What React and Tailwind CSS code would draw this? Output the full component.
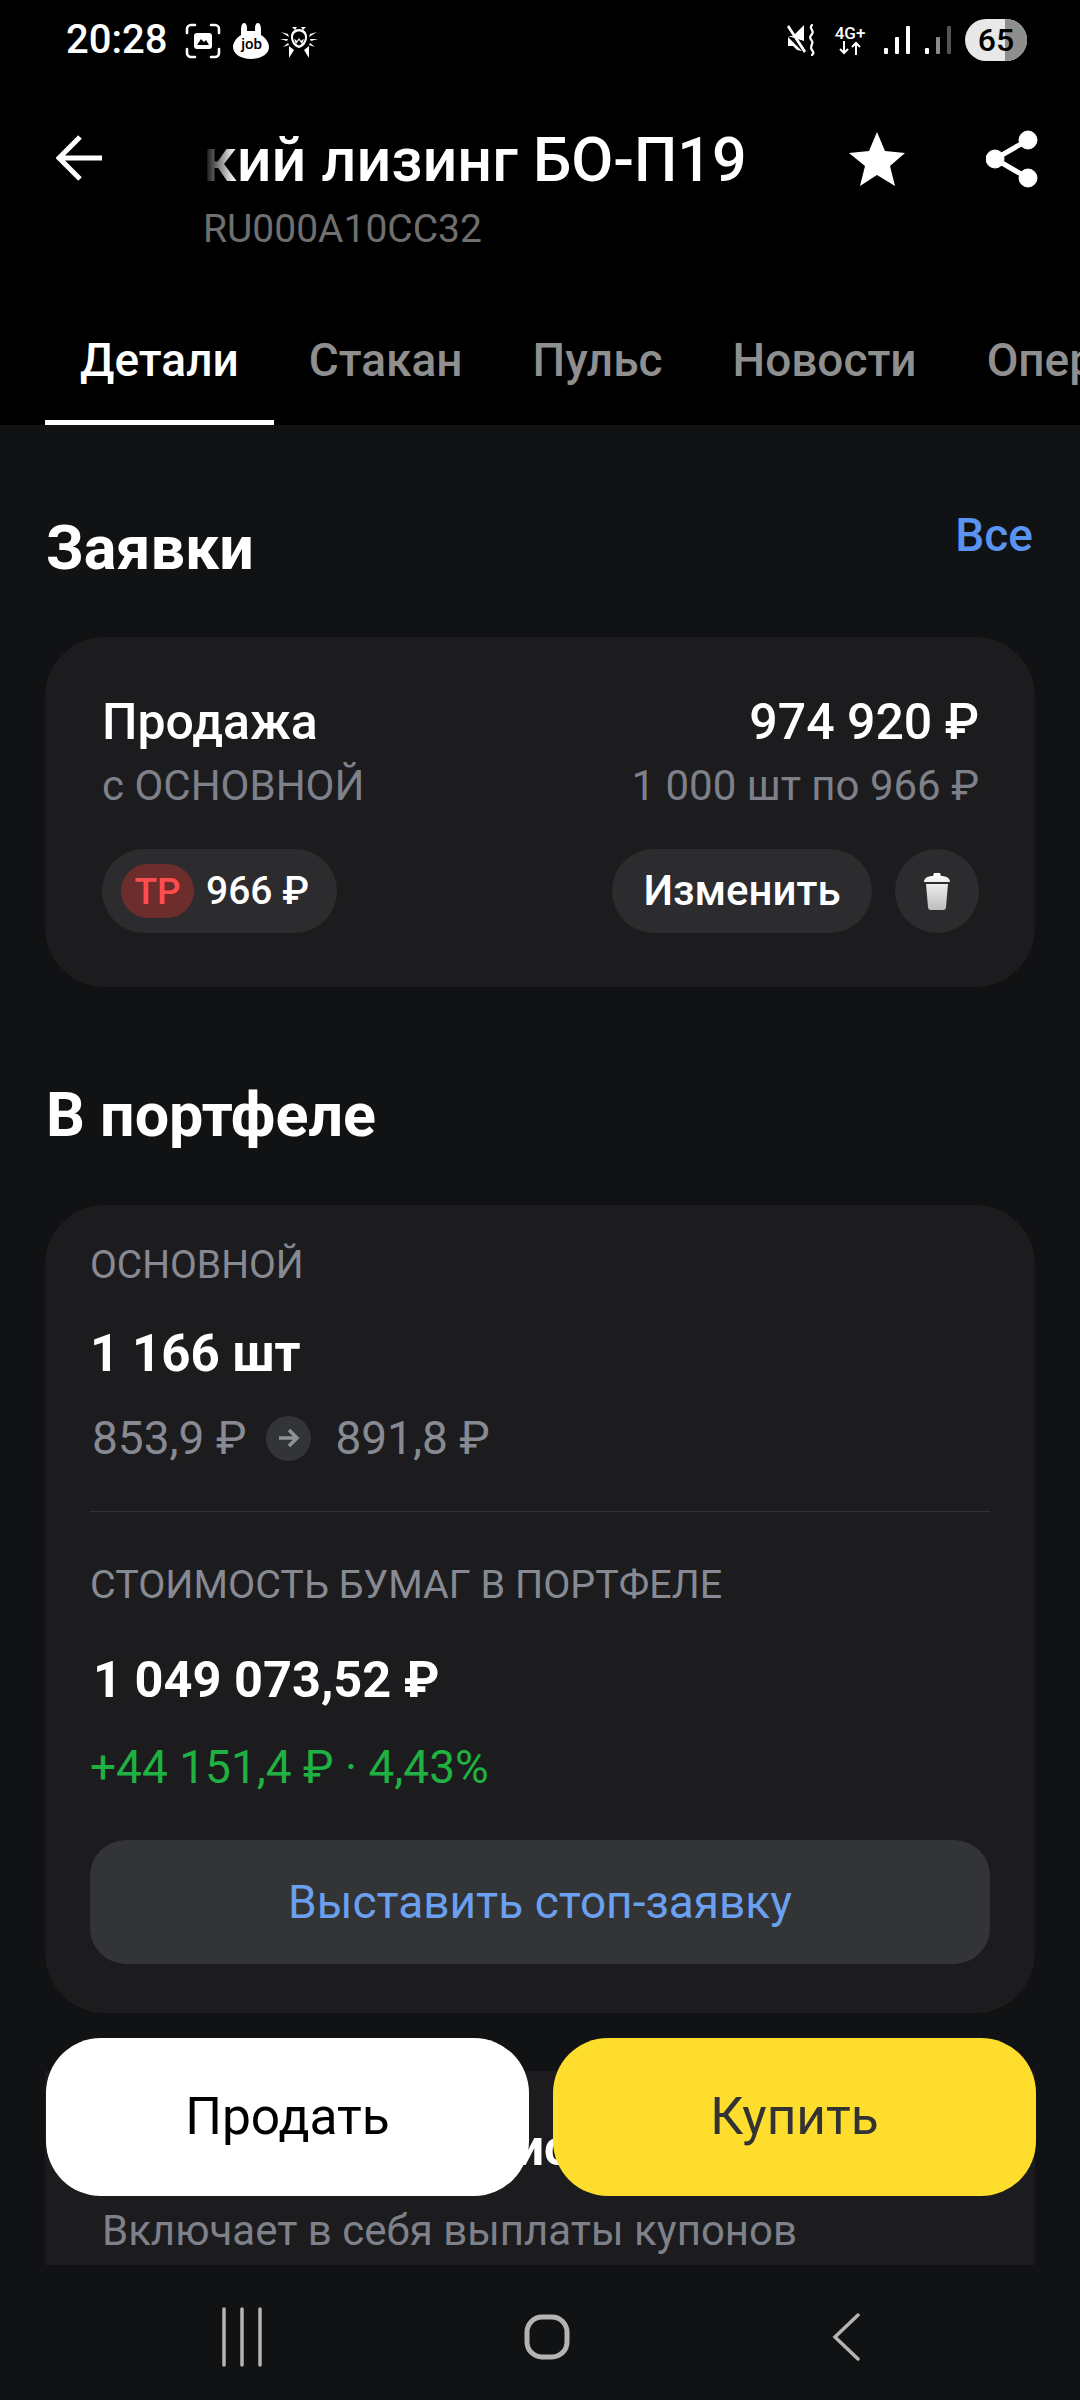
import React from "react";

const font = { fontFamily: "Roboto, 'Noto Sans', sans-serif" };

// status bar icons
const ScreenshotIcon = () => (
  <svg width="38" height="36" viewBox="0 0 36 36" fill="none">
    <path d="M2 10V6a4 4 0 0 1 4-4h4M26 2h4a4 4 0 0 1 4 4v4M34 26v4a4 4 0 0 1-4 4h-4M10 34H6a4 4 0 0 1-4-4v-4" stroke="white" strokeWidth="2.6" strokeLinecap="round" />
    <rect x="9" y="10" width="18" height="16" rx="3" fill="white" />
    <path d="M12 22l4-6 3 3 2-2 3 5z" fill="black" />
  </svg>
);

const JobIcon = () => (
  <div className="relative w-[36px] h-[36px]">
    <svg width="36" height="36" viewBox="0 0 36 36">
      <path d="M11 0c2 0 3 2 3 5v3h8V5c0-3 1-5 3-5s3 3 3 7v5c5 3 8 8 8 12 0 7-8 12-18 12S0 31 0 24c0-4 3-9 8-12V7c0-4 1-7 3-7z" fill="white" />
    </svg>
    <span className="absolute left-0 right-0 top-[12px] text-center text-[15px] leading-[18px] text-black font-medium">job</span>
  </div>
);

const SpiderIcon = () => (
  <svg width="38" height="34" viewBox="0 0 38 34" fill="white">
    <path d="M12 3h5l-2 3zM26 3h-5l2 3z" />
    <path d="M19 5c5 0 8 3 8 8 0 6-4 10-8 11-4-1-8-5-8-11 0-5 3-8 8-8zm0 2.500c-3.500 0-6 2.500-6 5.500 0 4 3 7.500 6 8.500 3-1 6-4.500 6-8.500 0-3-2.500-5.500-6-5.500z" />
    <path d="M14 15l2 5 3-4 3 4 2-5-2 1-1 1-2-3-2 3-1-1z" />
    <path d="M1 8l7 2 1 3zM37 8l-7 2-1 3zM0 15l8 0-1 2zM38 15l-8 0 1 2zM3 23l5-4 1 2zM35 23l-5-4-1 2z" />
    <path d="M9 22l5 4-5 8zM29 22l-5 4 5 8z" />
  </svg>
);

const MuteIcon = () => (
  <svg width="30" height="32" viewBox="0 0 30 32" fill="white">
    <path d="M1 12h5L17 1v16zM1 13l14 14-5-1-4-4H1zM2 1l17 26-2 2L0 3z" />
    <path d="M25 1c-4 4 3 5 0 9s-2 4 0 7-3 5 0 9 1 3 0 5" fill="none" stroke="white" strokeWidth="2.200" strokeLinecap="round" />
  </svg>
);

const SignalIcon = ({ dim }) => (
  <svg width="28" height="30" viewBox="0 0 28 30">
    <rect x="1" y="23" width="4" height="6" rx="1" fill="white" />
    <rect x="12" y="12" width="4" height="17" rx="1" fill={dim ? "#8a8a8a" : "white"} />
    <rect x="23" y="1" width="4" height="28" rx="1" fill={dim ? "#555" : "white"} />
  </svg>
);

const StatusBar = () => (
  <div className="flex items-center justify-between h-[80px] pl-[66px] pr-[53px]">
    <div className="flex items-center gap-[17px]">
      <span className="text-[40px] leading-none font-medium text-white">20:28</span>
      <div className="flex items-center gap-[11px] pt-[1px]">
        <ScreenshotIcon />
        <JobIcon />
        <SpiderIcon />
      </div>
    </div>
    <div className="flex items-center gap-[13px]">
      <MuteIcon />
      <div className="flex flex-col items-center w-[34px] -space-y-[1px] mx-[3px]">
        <span className="text-[17px] leading-[17px] font-medium text-white whitespace-nowrap">4G+</span>
        <svg width="24" height="14" viewBox="0 0 24 14" fill="none" stroke="white" strokeWidth="2">
          <path d="M6 0v12M2 8l4 4 4-4M18 14V2M14 6l4-4 4 4" />
        </svg>
      </div>
      <SignalIcon />
      <SignalIcon dim />
      <div className="relative w-[62px] h-[42px] rounded-full overflow-hidden bg-[#e8e8e8] flex items-center justify-center">
        <div className="absolute right-0 top-0 bottom-0 w-[22px] bg-[#8e8e8e]" />
        <span className="relative text-[32px] leading-none font-medium text-black">65</span>
      </div>
    </div>
  </div>
);

const Header = () => (
  <div className="flex items-start h-[210px] pl-[56px] pr-[58px] pt-[45px]">
    <svg width="46" height="46" viewBox="0 0 46 46" fill="none" stroke="white" strokeWidth="5" className="mt-[10px] shrink-0">
      <path d="M46 23H4M24 2L3 23l21 21" />
    </svg>
    <div className="ml-[101px] flex-1">
      <div className="relative w-fit">
        <div className="text-[61px] leading-[70px] font-medium text-white whitespace-nowrap">кий лизинг БО-П19</div>
        <div className="absolute left-0 top-0 bottom-0 w-[32px] bg-gradient-to-r from-black to-transparent" />
      </div>
      <div className="text-[39px] leading-[46px] mt-[11px] text-[#6f6f6f]">RU000A10CC32</div>
    </div>
    <svg width="56" height="54" viewBox="0 0 56 54" fill="white" className="mt-[7px] shrink-0">
      <path d="M28 0l8 19 20 2-15 13 5 20-18-11-17 11 5-20L0 21l20-2z" />
    </svg>
    <svg width="52" height="58" viewBox="0 0 52 58" fill="white" stroke="white" className="ml-[81px] mt-[5px] shrink-0 -mr-[16px]">
      <circle cx="42" cy="10" r="9" />
      <circle cx="9" cy="29" r="9" />
      <circle cx="42" cy="48" r="9" />
      <path d="M42 10L9 29l33 19" fill="none" strokeWidth="5" />
    </svg>
  </div>
);

const tabs = [
  { label: "Детали", active: true },
  { label: "Стакан" },
  { label: "Пульс" },
  { label: "Новости" },
  { label: "Операции" },
];

const Tabs = () => (
  <div className="flex h-[135px] overflow-hidden pl-[45px] bg-black">
    {tabs.map((tab) => (
      <div
        key={tab.label}
        className={`shrink-0 h-full flex items-center px-[35px] border-b-[5px] ${tab.active ? "border-white text-white" : "border-transparent text-[#8f8f8f]"}`}
      >
        <span className="text-[46px] leading-none font-medium pt-[10px]">{tab.label}</span>
      </div>
    ))}
  </div>
);

const Rub = "₽";

const OrderCard = () => (
  <div className="mx-[45px] mt-[54px] h-[350px] rounded-[60px] bg-[#1c1c1e] pl-[57px] pr-[56px] pt-[55px]">
    <div className="flex justify-between items-center">
      <span className="text-[50px] leading-[60px] font-medium text-white">Продажа</span>
      <span className="text-[50px] leading-[60px] font-medium text-white">974 920 {Rub}</span>
    </div>
    <div className="flex justify-between items-center mt-[9px] text-[42px] leading-[50px] text-[#7f818a]">
      <span>с ОСНОВНОЙ</span>
      <span>1 000 шт по 966 {Rub}</span>
    </div>
    <div className="flex items-center mt-[38px]">
      <div className="flex items-center h-[84px] w-[235px] rounded-full bg-[#2c2c2e] pl-[19px]">
        <div className="w-[73px] h-[54px] rounded-full bg-[#6e2d2d] flex items-center justify-center text-[37px] leading-none font-medium text-[#ff4d4f]">ТР</div>
        <span className="ml-[12px] text-[39px] leading-none font-medium text-white">966 {Rub}</span>
      </div>
      <div className="ml-auto flex items-center justify-center h-[84px] w-[260px] rounded-full bg-[#2c2c2e] text-[42px] leading-none font-medium text-white">Изменить</div>
      <div className="ml-[23px] flex items-center justify-center w-[84px] h-[84px] rounded-full bg-[#2c2c2e]">
        <svg width="26" height="38" viewBox="0 0 26 38">
          <defs>
            <linearGradient id="trash" x1="0" y1="0" x2="0" y2="1">
              <stop offset="0" stopColor="#ffffff" />
              <stop offset="1" stopColor="#bdbdbd" />
            </linearGradient>
          </defs>
          <path d="M10 1h6l1 3c5 0 9 2 9 6H0c0-4 4-6 9-6zM2 12h22l-2 23c0 2-1 3-3 3H7c-2 0-3-1-3-3z" fill="url(#trash)" />
        </svg>
      </div>
    </div>
  </div>
);

const PortfolioCard = () => (
  <div className="mx-[45px] mt-[55px] h-[808px] rounded-[60px] bg-[#1c1c1e] px-[45px] pt-[37px]">
    <div className="text-[39px] leading-[46px] text-[#878a92]">ОСНОВНОЙ</div>
    <div className="text-[51px] leading-[60px] font-bold text-white mt-[36px]">1 166 шт</div>
    <div className="flex items-center mt-[26px] text-[46px] leading-[56px] text-[#878a92] ml-[2px]">
      <span>853,9 {Rub}</span>
      <div className="ml-[20px] mr-[24px] w-[45px] h-[45px] rounded-full bg-[#333436] flex items-center justify-center">
        <svg width="22" height="20" viewBox="0 0 22 20" fill="none" stroke="#8f929a" strokeWidth="3.500">
          <path d="M1 10h18M11 2l8 8-8 8" />
        </svg>
      </div>
      <span>891,8 {Rub}</span>
    </div>
    <div className="h-[1px] bg-[#303133] mt-[45px]" />
    <div className="text-[39.500px] leading-[46px] text-[#878a92] mt-[50px]">СТОИМОСТЬ БУМАГ В ПОРТФЕЛЕ</div>
    <div className="text-[50.500px] leading-[60px] font-bold text-white mt-[42px] ml-[3px]">1 049 073,52 {Rub}</div>
    <div className="text-[46px] leading-[56px] text-[#1fb141] mt-[29px]">+44 151,4 {Rub} · 4,43%</div>
    <div className="mt-[45px] h-[124px] rounded-[36px] bg-[#333436] flex items-center justify-center text-[46px] leading-none text-[#6ba0f0]">Выставить стоп-заявку</div>
  </div>
);

export default function App() {
  return (
    <div className="relative w-[1080px] h-[2400px] flex flex-col overflow-hidden bg-[#111213]" style={font}>
      <div className="bg-black">
        <StatusBar />
        <Header />
        <Tabs />
      </div>

      <div className="flex-1 overflow-hidden">
        <div className="flex items-center justify-between pl-[46px] pr-[47px] pt-[88px]">
          <h2 className="text-[61px] leading-[70px] font-bold text-white">Заявки</h2>
          <span className="text-[46px] leading-none font-medium text-[#5a93f0] -mt-[26px]">Все</span>
        </div>
        <OrderCard />
        <h2 className="text-[61px] leading-[70px] font-bold text-white pl-[46px] mt-[93px]">В портфеле</h2>
        <PortfolioCard />
        <div className="mx-[45px] mt-[58px] h-[195px] bg-[#1c1c1e] pl-[57px] pt-[47px]">
          <div className="text-[50px] leading-[60px] font-bold text-white">Общий доход начислен</div>
          <div className="text-[42px] leading-[50px] text-[#7f818a] mt-[28px]">Включает в себя выплаты купонов</div>
        </div>
      </div>

      <div className="h-[135px] flex items-center justify-between pl-[222px] pr-[220px] pt-[8px]">
        <svg width="40" height="60" viewBox="0 0 40 60" fill="none" stroke="#b4b4b4" strokeWidth="3.500" strokeLinecap="round">
          <path d="M2 2v56M20 2v56M38 2v56" />
        </svg>
        <svg width="46" height="46" viewBox="0 0 46 46" fill="none" stroke="#b4b4b4" strokeWidth="5">
          <rect x="3" y="3" width="40" height="40" rx="15" />
        </svg>
        <svg width="28" height="48" viewBox="0 0 28 48" fill="none" stroke="#b4b4b4" strokeWidth="3.500" strokeLinecap="round">
          <path d="M26 2L3 24l23 22" />
        </svg>
      </div>

      {/* Sell and buy buttons float over the scrolled content */}
      <div className="absolute left-[46px] right-[44px] top-[2038px] flex gap-[24px]">
        <button className="flex-1 h-[158px] rounded-[55px] bg-white text-[51.500px] text-black">Продать</button>
        <button className="flex-1 h-[158px] rounded-[55px] bg-[#ffdd2d] text-[51.500px] text-[#333]">Купить</button>
      </div>
    </div>
  );
}
